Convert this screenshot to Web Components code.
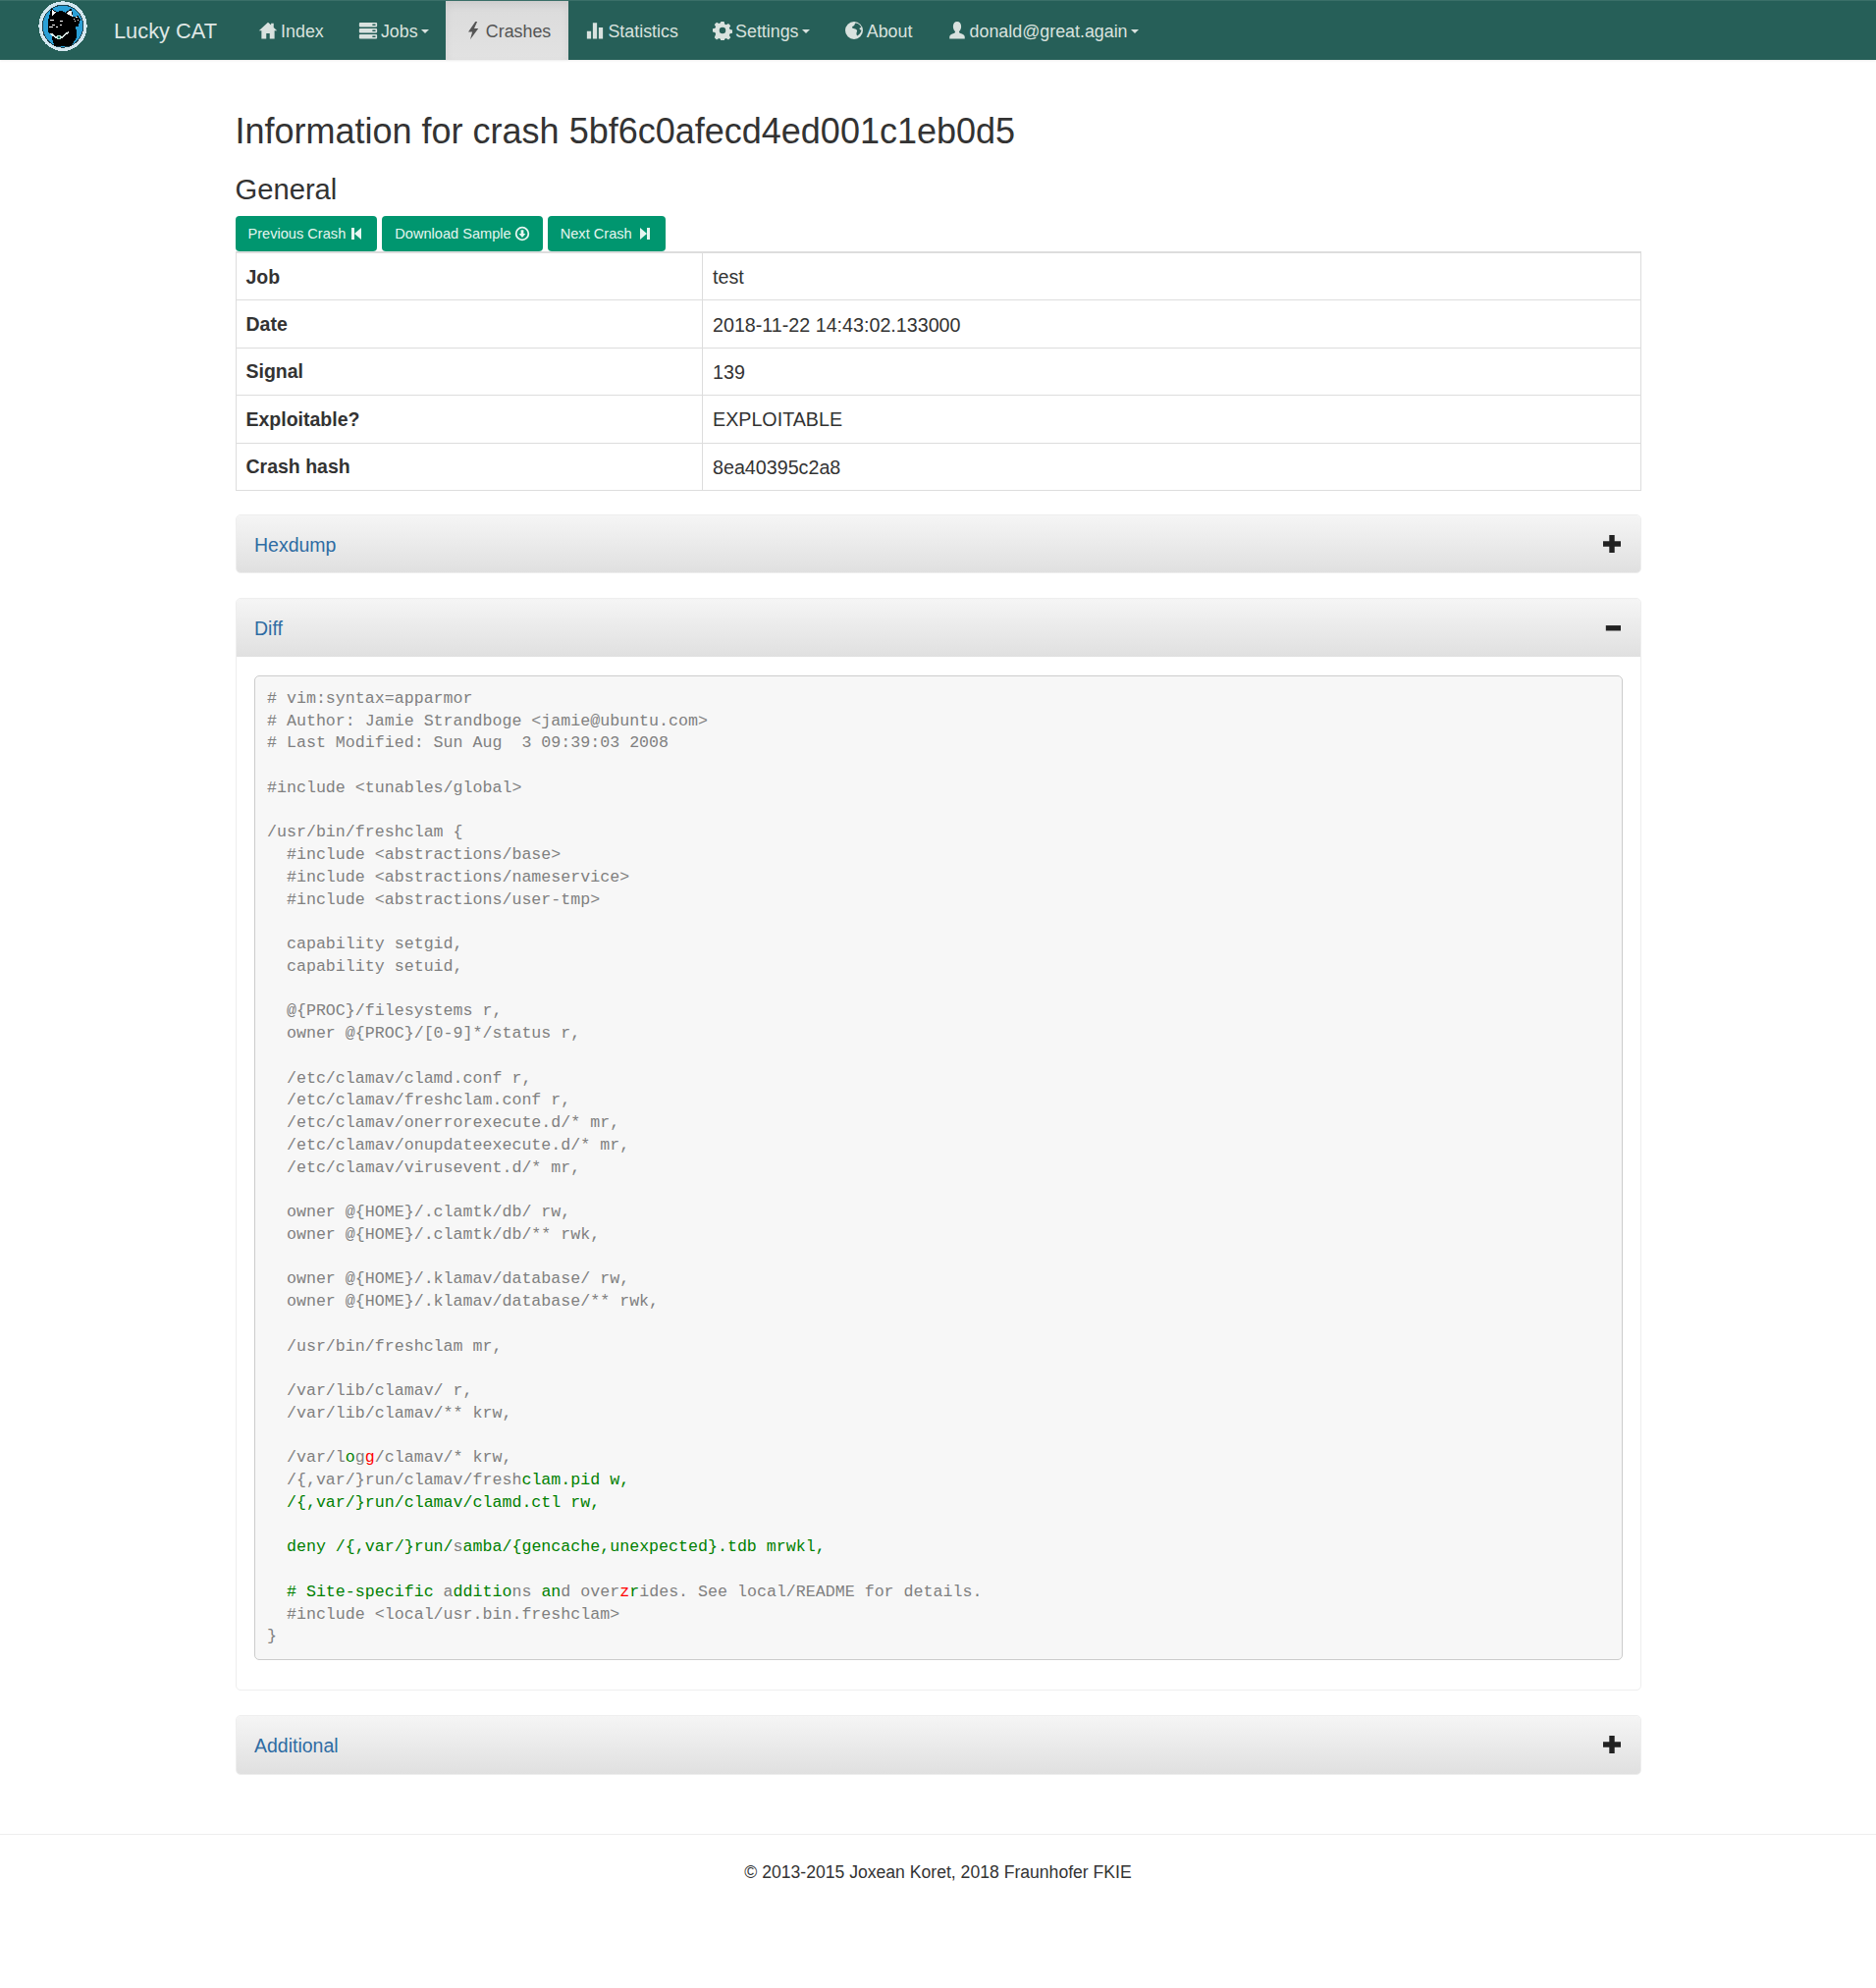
<!DOCTYPE html>
<html lang="en">
<head>
<meta charset="utf-8" />
<title>Lucky CAT - Crash</title>
<style>
  html, body { margin: 0; padding: 0; background: #fff; }
  body { font-family: "Liberation Sans", Arial, sans-serif; color: #333; font-size: 19.5px; min-height: 2025px; }
  .g { color: #008000; }
  .r { color: #ff0000; }
  code-block div { min-height: 22.75px; }
</style>

<template id="g-icon-template">
  <style>
    :host { display: inline-block; width: 1em; height: 1em; line-height: 0; vertical-align: -0.12em; }
    svg { width: 100%; height: 100%; display: block; fill: currentColor; }
  </style>
  <svg viewBox="0 0 16 16"></svg>
</template>

<template id="nav-item-template">
  <style>
    :host { display: block; }
    a { display: flex; align-items: center; height: 60px; padding: 2px 17.6px 0; box-sizing: border-box; color: #d9e2df; font-size: 17.85px; white-space: nowrap; }
    :host([active]) a { color: #555; background: linear-gradient(to bottom, #dbdbdb 0%, #e2e2e2 100%); box-shadow: inset 0 4px 8px rgba(0,0,0,.07); }
    ::slotted(g-icon) { font-size: 20px; margin-right: 3px; margin-top: -3px; }
    .caret { display: none; width: 0; height: 0; margin-left: 3px; border-top: 4px solid; border-left: 4px solid transparent; border-right: 4px solid transparent; }
    :host([dropdown]) .caret { display: inline-block; }
  </style>
  <a><slot></slot><span class="caret"></span></a>
</template>

<template id="lucky-navbar-template">
  <style>
    :host { display: flex; height: 61px; background: #265f58; border-top: 1px solid #3a6f68; box-sizing: border-box; box-shadow: 0 1px 2px rgba(0,0,0,.08); }
    .brand { display: flex; align-items: center; padding-left: 36px; width: 245.5px; box-sizing: border-box; color: #dfe7e5; font-size: 21.8px; }
    svg { width: 56px; height: 56px; margin-right: 24px; flex: none; align-self: flex-start; margin-top: -1px; }
    span { padding-top: 1px; }
    nav { display: flex; }
  </style>
  <div class="brand">
    <svg viewBox="0 0 168 168" shape-rendering="crispEdges">
      <ellipse cx="84" cy="80" rx="74" ry="76" fill="#d3e7ef"/>
      <ellipse cx="84" cy="80" rx="64" ry="66" fill="#1c3f4d"/>
      <ellipse cx="84" cy="80" rx="61" ry="63" fill="#2a9fd6"/>
      <g transform="translate(4,-2)">
        <path d="M34 92 L36 62 L44 28 L62 38 Q76 32 88 40 L106 28 L112 54 L126 50 L134 62 L126 84 L120 84 L122 118 L106 142 L54 142 L46 118 L50 108 Q34 104 34 92Z" fill="#000"/>
        <path d="M46 32 L60 40 L48 52Z M90 42 L105 32 L110 54Z" fill="#fff"/>
        <path d="M42 62h12v3h-12z M46 76h9v3h-9z M72 64h8v3h-8z M72 76h6v3h-6z M38 84h12v3h-12z M60 84h6v3h-6z M112 58h4v3h-4z M120 54h4v3h-4z M124 62h3v3h-3z M116 66h3v3h-3z" fill="#fff"/>
        <path d="M44 102 L58 112 L78 112 L96 98 L98 102 L78 118 L56 118 L42 106Z" fill="#dcefe9"/>
        <circle cx="68" cy="117" r="7" fill="#b9e6da"/>
        <circle cx="68" cy="117" r="3" fill="#0a6a58"/>
      </g>
    </svg>
    <span>Lucky CAT</span>
  </div>
  <nav><slot></slot></nav>
</template>

<template id="action-button-template">
  <style>
    :host { display: inline-block; }
    a { display: flex; align-items: center; height: 36px; padding: 0 13px; box-sizing: border-box; background: #00966f; border-radius: 4px; color: #e6f5f0; font-size: 14.6px; white-space: nowrap; }
    ::slotted(g-icon) { font-size: 16px; margin-left: 3px; }
  </style>
  <a><slot></slot></a>
</template>

<template id="info-row-template">
  <style>
    :host { display: grid; grid-template-columns: 475.5px 1fr; height: 48.4px; box-sizing: border-box; border-top: 1px solid #ddd; }
    :host(:first-child) { border-top: 0; }
    .k { font-weight: bold; font-size: 19.5px; padding: 1px 10px 0; display: flex; align-items: center; border-right: 1px solid #ddd; }
    .v { padding: 2px 10px 0; display: flex; align-items: center; font-size: 19.7px; }
  </style>
  <div class="k"><slot name="k"></slot></div>
  <div class="v"><slot></slot></div>
</template>

<template id="collapse-panel-template">
  <style>
    :host { display: block; border: 1px solid #eee; border-radius: 5px; margin-bottom: 25px; box-sizing: border-box; }
    header { display: flex; align-items: center; justify-content: space-between; height: 58.5px; padding: 0 18.5px; background: linear-gradient(to bottom, #f5f5f5 0%, #e0e0e0 100%); color: #2f6ca3; font-size: 19.5px; border-radius: 4px 4px 0 0; }
    :host(:not([open])) header { border-radius: 4px; }
    header > span:first-child { padding-top: 2px; }
    .sign { width: 18px; height: 18px; color: #222; margin-right: 1px; }
    .sign svg { display: block; width: 100%; height: 100%; fill: currentColor; }
    section { display: none; padding: 19px 18px 30px; }
    :host([open]) section { display: block; }
  </style>
  <header><span><slot name="title"></slot></span><span class="sign"></span></header>
  <section><slot></slot></section>
</template>

<template id="code-block-template">
  <style>
    :host { display: block; }
    pre { display: flex; flex-direction: column; margin: 0; padding: 12px 12.5px 11px; background: #f7f7f7; border: 1px solid #ccc; border-radius: 5px; color: #808080; font-family: "Liberation Mono", "Courier New", monospace; font-size: 16.64px; line-height: 22.75px; white-space: pre; overflow: hidden; }
  </style>
  <pre><slot></slot></pre>
</template>

<template id="page-footer-template">
  <style>
    :host { display: block; margin-top: 60px; border-top: 1px solid #eee; text-align: center; padding-top: 28px; font-size: 17.6px; color: #333; }
  </style>
  <slot></slot>
</template>

<script>
  const ICONS = {
    home: '<path d="M8 1.300 0.600 8.200h2.100v6.500h3.900v-4.400h2.800v4.400h3.900V8.200h2.100L12.600 5.500V2.200h-2.100v1.400z"/>',
    tasks: '<path d="M1.500 1.500h13a.8.8 0 0 1 .8.8v2a.8.8 0 0 1-.8.8h-13a.8.8 0 0 1-.8-.8v-2a.8.8 0 0 1 .8-.8zM1.500 6.300h13a.8.8 0 0 1 .8.8v2a.8.8 0 0 1-.8.8h-13a.8.8 0 0 1-.8-.8v-2a.8.8 0 0 1 .8-.8zM1.500 11.100h13a.8.8 0 0 1 .8.8v2a.8.8 0 0 1-.8.8h-13a.8.8 0 0 1-.8-.8v-2a.8.8 0 0 1 .8-.8z"/><path fill="#265f58" d="M11.500 2.700h2.500v1.200h-2.500zM11.500 7.500h2.500v1.200h-2.500zM11.500 12.300h2.500v1.200h-2.500z"/>',
    flash: '<path d="M9.800 0.800 4 9.200h3.300L5.600 15.400l6.600-9.100H8.800l2.500-5.500z"/>',
    stats: '<path d="M1.500 8.500h3.400v6.300H1.500zM6.300 1.800h3.400v13H6.300zM11.100 5.500h3.400v9.300h-3.400z"/>',
    cog: '<path fill-rule="evenodd" d="M6.700 0.800h2.600l.4 2 1.300.6 1.800-1.100 1.800 1.800-1.100 1.800.6 1.300 2 .4v2.600l-2 .4-.6 1.300 1.100 1.800-1.800 1.800-1.800-1.100-1.300.6-.4 2H6.700l-.4-2-1.300-.6-1.800 1.100-1.800-1.800L2.500 10.900l-.6-1.300-2-.4V6.600l2-.4.6-1.300-1.100-1.800 1.800-1.800 1.800 1.100 1.300-.6zM8 5.300a2.600 2.600 0 1 0 0 5.200 2.600 2.600 0 0 0 0-5.200z"/>',
    globe: '<path fill-rule="evenodd" d="M8 .8a7.200 7.200 0 1 1 0 14.400A7.200 7.200 0 0 1 8 .8zM9.300 2c-1 .6-.5 1.500-1.400 2.100-.8.5-1.700.4-1.400 1.600.3.9 1.600.5 2.500 1 1.200.6 1.800 1.200 1.200 2.600-.5 1.100-.2 2.500.4 3 1.500-.9 3.100-2.600 3.400-4.600-.7-.1-1.400-.5-1.700-1.400.6-.6 1.400-.4 1.600-.7C13.400 3.800 11.500 2.400 9.300 2z"/>',
    user: '<path d="M8 .8c2 0 3.300 1.600 3.300 3.900 0 1.800-.8 3.300-1.700 4 0 .9.300 1.300 1.200 1.700 1.500.6 3.400 1.200 3.400 2.700v1.700H1.800v-1.700c0-1.500 1.900-2.100 3.400-2.700.9-.4 1.200-.8 1.200-1.700-.9-.7-1.700-2.200-1.700-4C4.700 2.400 6 .8 8 .8z"/>',
    back: '<path d="M3 2h3v12H3zM6 8l7-6v12z"/>',
    forward: '<path d="M13 2h-3v12h3zM10 8 3 2v12z"/>',
    down: '<path fill-rule="evenodd" d="M8 .8a7.200 7.200 0 1 1 0 14.400A7.200 7.200 0 0 1 8 .8zM8 2.600a5.400 5.400 0 1 0 0 10.800A5.400 5.400 0 0 0 8 2.600zM6.600 4.200h2.800v3.800h2L8 12 4.600 8h2z"/>',
    plus: '<path d="M5.600 0h4.800v5.600H16v4.800h-5.600V16H5.600v-5.600H0V5.600h5.600z"/>',
    minus: '<path d="M2.500 5.400h13.500v4.800H2.500z"/>'
  };

  // small helper, every element clones its own template
  class Base extends HTMLElement {
    constructor(id) {
      super();
      this._shadow = this.attachShadow({mode: 'open'});
      this._shadow.appendChild(document.querySelector(id).content.cloneNode(true));
    }
  }

  class GIcon extends Base {
    constructor() { super('#g-icon-template'); }
    connectedCallback() {
      this._shadow.querySelector('svg').innerHTML = ICONS[this.getAttribute('name')] || '';
    }
  }
  class LuckyNavbar extends Base { constructor() { super('#lucky-navbar-template'); } }
  class NavItem extends Base { constructor() { super('#nav-item-template'); } }
  class ActionButton extends Base { constructor() { super('#action-button-template'); } }
  class InfoRow extends Base { constructor() { super('#info-row-template'); } }
  class CodeBlock extends Base { constructor() { super('#code-block-template'); } }
  class PageFooter extends Base { constructor() { super('#page-footer-template'); } }

  class CollapsePanel extends Base {
    constructor() { super('#collapse-panel-template'); }
    connectedCallback() {
      const name = this.hasAttribute('open') ? 'minus' : 'plus';
      this._shadow.querySelector('.sign').innerHTML = '<svg viewBox="0 0 16 16">' + ICONS[name] + '</svg>';
    }
  }

  class CrashPage extends HTMLElement {
    constructor() {
      super();
      this.attachShadow({mode: 'open'}).innerHTML = `
        <style>
          :host { display: block; width: 1432px; margin: 0 auto; }
          h1 { margin: 0; padding-top: 51px; font-size: 36px; font-weight: 400; line-height: 44px; color: #333; }
          h2 { margin: 0; padding-top: 19px; font-size: 29.2px; font-weight: 400; line-height: 36px; color: #333; }
          .btns { display: flex; gap: 5px; margin-top: 9px; }
          .table { border: 1px solid #ddd; margin-bottom: 24px; }
        </style>
        <h1><slot name="title"></slot></h1>
        <h2><slot name="sub"></slot></h2>
        <div class="btns"><slot name="btn"></slot></div>
        <div class="table"><slot name="row"></slot></div>
        <slot></slot>`;
    }
  }

  customElements.define('g-icon', GIcon);
  customElements.define('lucky-navbar', LuckyNavbar);
  customElements.define('nav-item', NavItem);
  customElements.define('action-button', ActionButton);
  customElements.define('info-row', InfoRow);
  customElements.define('code-block', CodeBlock);
  customElements.define('page-footer', PageFooter);
  customElements.define('collapse-panel', CollapsePanel);
  customElements.define('crash-page', CrashPage);
</script>
</head>
<body>

<lucky-navbar>
  <nav-item><g-icon name="home"></g-icon>Index</nav-item>
  <nav-item dropdown><g-icon name="tasks"></g-icon>Jobs</nav-item>
  <nav-item active><g-icon name="flash"></g-icon>Crashes</nav-item>
  <nav-item><g-icon name="stats"></g-icon>Statistics</nav-item>
  <nav-item dropdown><g-icon name="cog"></g-icon>Settings</nav-item>
  <nav-item><g-icon name="globe"></g-icon>About</nav-item>
  <nav-item dropdown><g-icon name="user"></g-icon>donald@great.again</nav-item>
</lucky-navbar>

<crash-page>
  <span slot="title">Information for crash 5bf6c0afecd4ed001c1eb0d5</span>
  <span slot="sub">General</span>

  <action-button slot="btn">Previous Crash<g-icon name="back"></g-icon></action-button>
  <action-button slot="btn">Download Sample<g-icon name="down"></g-icon></action-button>
  <action-button slot="btn">Next Crash<g-icon name="forward" style="margin-left:5px"></g-icon></action-button>

  <info-row slot="row"><span slot="k">Job</span>test</info-row>
  <info-row slot="row"><span slot="k">Date</span>2018-11-22 14:43:02.133000</info-row>
  <info-row slot="row"><span slot="k">Signal</span>139</info-row>
  <info-row slot="row"><span slot="k">Exploitable?</span>EXPLOITABLE</info-row>
  <info-row slot="row"><span slot="k">Crash hash</span>8ea40395c2a8</info-row>

  <collapse-panel><span slot="title">Hexdump</span></collapse-panel>

  <collapse-panel open>
    <span slot="title">Diff</span>
    <code-block>
      <div># vim:syntax=apparmor</div>
      <div># Author: Jamie Strandboge &lt;jamie@ubuntu.com&gt;</div>
      <div># Last Modified: Sun Aug  3 09:39:03 2008</div>
      <div></div>
      <div>#include &lt;tunables/global&gt;</div>
      <div></div>
      <div>/usr/bin/freshclam {</div>
      <div>  #include &lt;abstractions/base&gt;</div>
      <div>  #include &lt;abstractions/nameservice&gt;</div>
      <div>  #include &lt;abstractions/user-tmp&gt;</div>
      <div></div>
      <div>  capability setgid,</div>
      <div>  capability setuid,</div>
      <div></div>
      <div>  @{PROC}/filesystems r,</div>
      <div>  owner @{PROC}/[0-9]*/status r,</div>
      <div></div>
      <div>  /etc/clamav/clamd.conf r,</div>
      <div>  /etc/clamav/freshclam.conf r,</div>
      <div>  /etc/clamav/onerrorexecute.d/* mr,</div>
      <div>  /etc/clamav/onupdateexecute.d/* mr,</div>
      <div>  /etc/clamav/virusevent.d/* mr,</div>
      <div></div>
      <div>  owner @{HOME}/.clamtk/db/ rw,</div>
      <div>  owner @{HOME}/.clamtk/db/** rwk,</div>
      <div></div>
      <div>  owner @{HOME}/.klamav/database/ rw,</div>
      <div>  owner @{HOME}/.klamav/database/** rwk,</div>
      <div></div>
      <div>  /usr/bin/freshclam mr,</div>
      <div></div>
      <div>  /var/lib/clamav/ r,</div>
      <div>  /var/lib/clamav/** krw,</div>
      <div></div>
      <div>  /var/l<span class="g">o</span>g<span class="r">g</span>/clamav/* krw,</div>
      <div>  /{,var/}run/clamav/fresh<span class="g">clam.pid w,</span></div>
      <div class="g">  /{,var/}run/clamav/clamd.ctl rw,</div>
      <div></div>
      <div><span class="g">  deny /{,var/}run/</span>s<span class="g">amba/{gencache,unexpected}.tdb mrwkl,</span></div>
      <div></div>
      <div><span class="g">  # Site-specific</span> a<span class="g">dditio</span>ns <span class="g">an</span>d over<span class="r">z</span><span class="g">r</span>ides. See local/README for details.</div>
      <div>  #include &lt;local/usr.bin.freshclam&gt;</div>
      <div>}</div>
    </code-block>
  </collapse-panel>

  <collapse-panel><span slot="title">Additional</span></collapse-panel>
</crash-page>

<page-footer>© 2013-2015 Joxean Koret, 2018 Fraunhofer FKIE</page-footer>

</body>
</html>
